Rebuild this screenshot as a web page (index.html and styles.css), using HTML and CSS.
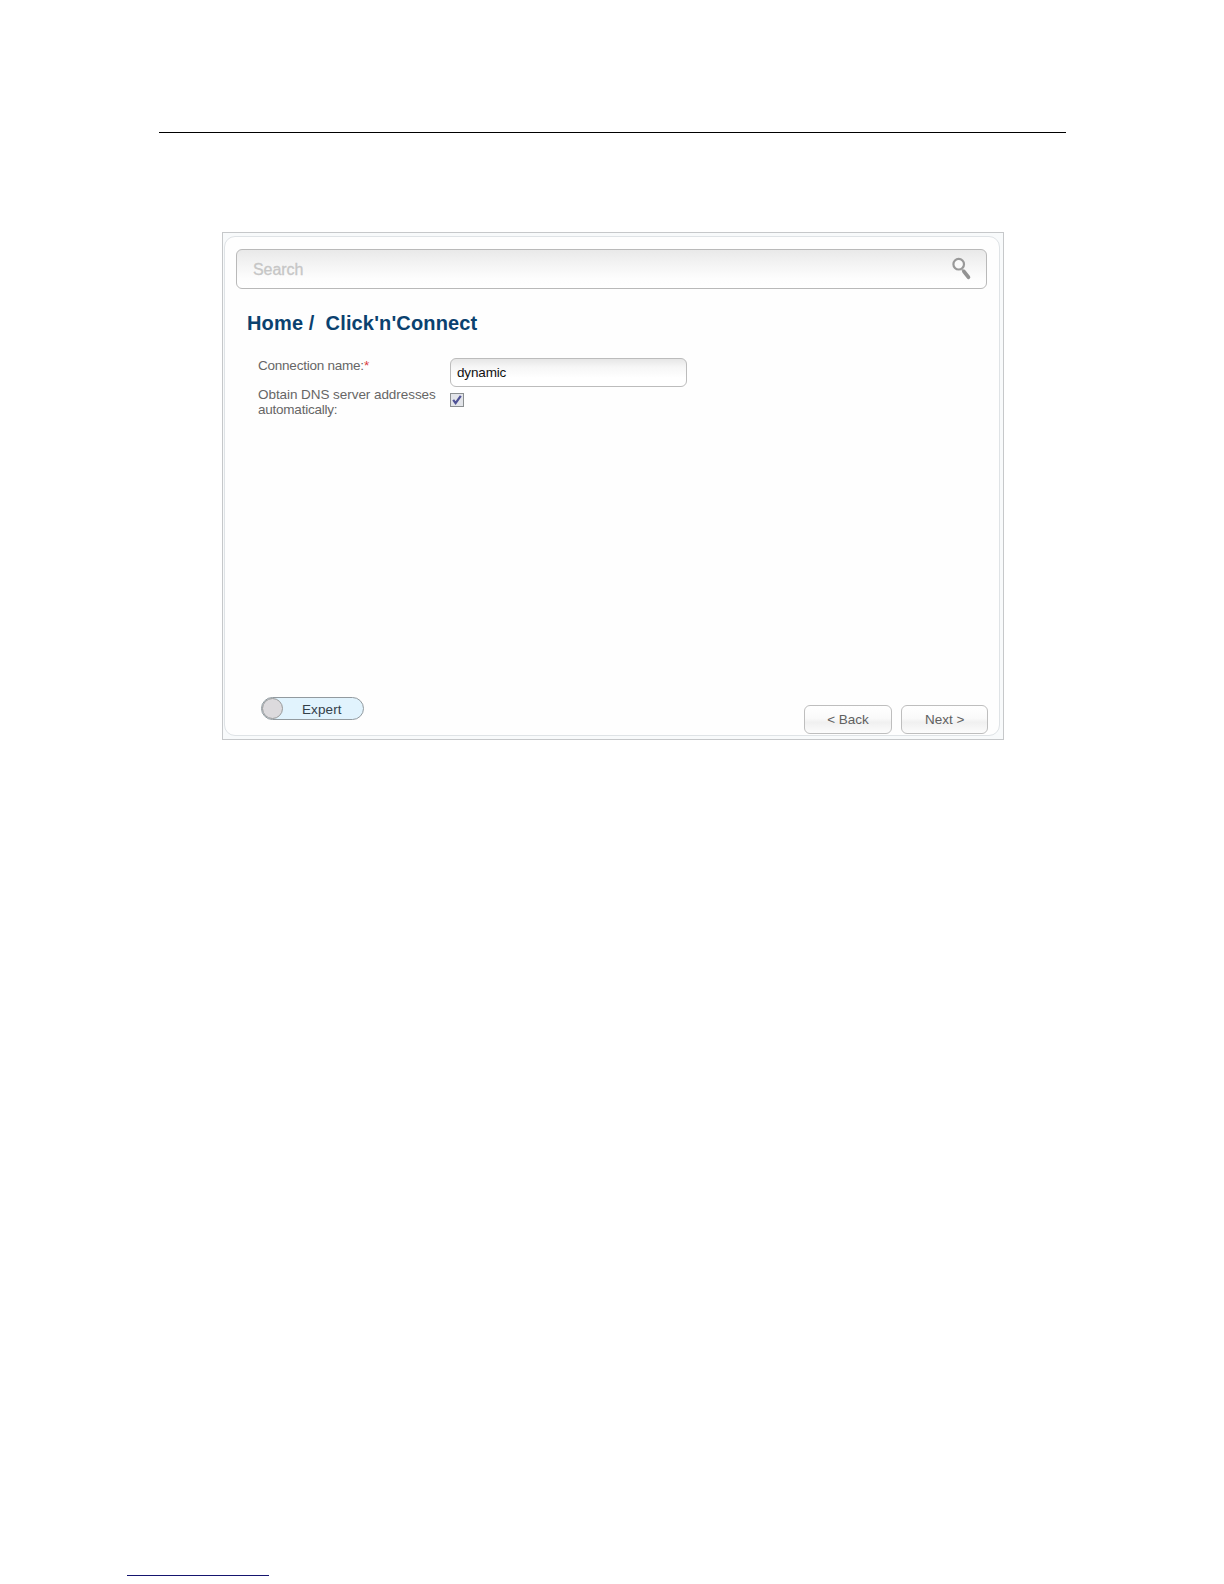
FILE: index.html
```html
<!DOCTYPE html>
<html lang="en">
<head>
<meta charset="utf-8">
<title>Click'n'Connect</title>
<link rel="stylesheet" href="styles.css">
</head>
<body>
<div class="page">
  <hr class="header-rule">
  <main class="frame">
    <section class="panel">
      <div class="search">
        <span class="search-text">Search</span>
        <svg class="search-icon" width="20" height="24" viewBox="0 0 20 24">
          <circle cx="6.7" cy="7.2" r="5.3" fill="#fafafa" stroke="#999" stroke-width="2.2"/>
          <path d="M9.8 12l2.2 2.7" stroke="#aaa" stroke-width="2"/>
          <path d="M12 14.6l4.4 5.6" stroke="#929292" stroke-width="3.8" stroke-linecap="round"/>
        </svg>
      </div>
      <h1 class="title"><span>Home /</span><span>Click'n'Connect</span></h1>
      <div class="form">
        <div class="label label-name">Connection name:<span class="required">*</span></div>
        <div class="input">dynamic</div>
        <div class="label label-dns"><span class="dns-first">Obtain DNS server addresses</span><br>automatically:</div>
        <div class="checkbox">
          <svg width="12" height="12" viewBox="0 0 12 12"><path d="M2.2 5.8l2.4 3.4L9.8 1.8" fill="none" stroke="#4f5296" stroke-width="2.2"/></svg>
        </div>
      </div>
      <div class="actions">
        <div class="toggle"><span class="knob"></span><span class="toggle-text">Expert</span></div>
        <div class="button back">&lt; Back</div>
        <div class="button next">Next &gt;</div>
      </div>
    </section>
  </main>
  <hr class="footer-rule">
</div>
</body>
</html>
```
FILE: styles.css
```css
* { box-sizing: border-box; }
body { margin: 0; background: #fff; font-family: "Liberation Sans", Arial, sans-serif; }
.page { display: flex; flex-direction: column; width: 1224px; height: 1584px; padding: 132px 0 8px; }
.header-rule { width: 907px; height: 1px; margin: 0 0 0 159px; border: 0; background: #000; }
.footer-rule { width: 142px; height: 1px; margin: auto 0 0 127px; border: 0; background: #15156f; }
.frame { width: 782px; height: 508px; margin: 99px 0 0 222px; padding: 3px 3px 3px 1px; border: 1px solid #c6c8ca; background: #f8fafb; }
.panel { display: flex; flex-direction: column; height: 500px; padding: 12px 11px 1px 11px; border: 1px solid #dfe3e6; border-radius: 11px; background: #fefefe; }
.search { display: flex; align-items: center; justify-content: space-between; flex: none; width: 751px; height: 40px; padding: 0 14px 0 16px; border: 1px solid #b9b9b9; border-radius: 6px; background: linear-gradient(#e9e9e9, #f3f3f3 35%, #fdfdfd 75%, #fff); }
.search-text { padding-top: 1px; font-size: 16px; letter-spacing: -0.05px; color: #c6c6c6; -webkit-text-stroke: 0.3px #c6c6c6; }
.search-icon { flex: none; }
.title { display: flex; gap: 11px; margin: 23px 0 0 11px; font-size: 20px; line-height: 23px; letter-spacing: 0.15px; color: #0a416f; white-space: nowrap; }
.form { display: grid; grid-template-columns: 192px 237px; grid-template-rows: 29px 34px; margin: 23px 0 0 22px; }
.label { font-size: 13.5px; line-height: 15px; letter-spacing: -0.23px; color: #666; white-space: nowrap; }
.dns-first { letter-spacing: -0.06px; }
.required { color: #dc3c40; }
.input { height: 29px; padding-left: 6px; border: 1px solid #bcbcbc; border-radius: 6px; background: linear-gradient(#e6e6e6, #f6f6f6 30%, #fff 70%); font-size: 13.5px; line-height: 27px; letter-spacing: -0.15px; color: #111; }
.checkbox { display: flex; align-items: center; justify-content: center; width: 14px; height: 14px; margin-top: 6px; border: 1px solid #8b8f91; background: #e2e4e9; }
.actions { display: flex; align-items: flex-end; margin-top: auto; padding-left: 25px; }
.toggle { display: flex; align-items: center; width: 103px; height: 23px; margin-bottom: 14px; border: 1px solid #929a9f; border-radius: 12px; background: #e1f3fd; }
.knob { width: 21px; height: 21px; border: 1px solid #999; border-radius: 50%; background: #dcdadd; }
.toggle-text { margin-left: 19px; padding-top: 2px; font-size: 13.5px; letter-spacing: 0.1px; color: #334049; }
.button { height: 29px; border: 1px solid #bebebe; border-radius: 6px; background: linear-gradient(#fff, #fafafa 45%, #f0f0f0 60%, #fcfcfc); font-size: 13.5px; line-height: 27px; text-align: center; color: #606060; }
.back { width: 89px; margin-left: 440px; }
.next { width: 87px; margin-left: 9px; }
```
